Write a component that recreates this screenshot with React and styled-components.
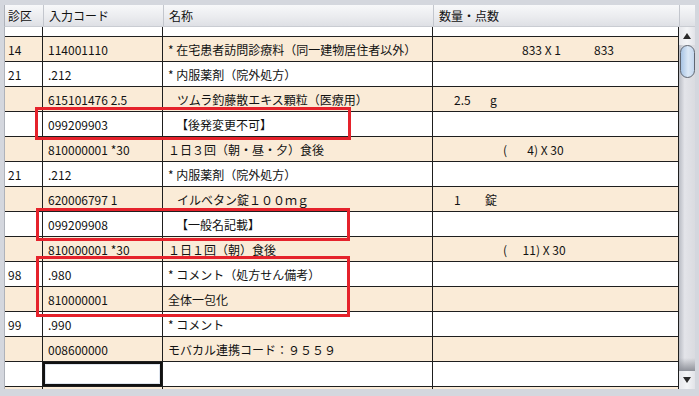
import React from "react";
import styled, { createGlobalStyle } from "styled-components";

const COLS = "38px 120px 270px 246px";

const ROWS = [
  { ku: "", code: "", name: "* 在宅時医学総合管理料（単一建物診療患者１人）", tone: "white", partial: true },
  { ku: "14", code: "114001110", name: "* 在宅患者訪問診療料（同一建物居住者以外）", tone: "tan", qty: [["", 89], ["833 X 1", 72], ["833"]] },
  { ku: "21", code: ".212", name: "* 内服薬剤（院外処方）", tone: "white" },
  { ku: "", code: "615101476 2.5", name: "ツムラ釣藤散エキス顆粒（医療用）", indent: 9, tone: "tan", qty: [["", 21], ["2.5", 36], ["g"]] },
  { ku: "", code: "099209903", name: "【後発変更不可】", indent: 8, tone: "white" },
  { ku: "", code: "810000001 *30", name: "１日３回（朝・昼・夕）食後", tone: "tan", qty: [["", 70], ["(", 10], ["4)", 25, "right"], [" X 30"]] },
  { ku: "21", code: ".212", name: "* 内服薬剤（院外処方）", tone: "white" },
  { ku: "", code: "620006797 1", name: "イルベタン錠１００ｍｇ", indent: 9, tone: "tan", qty: [["", 21], ["1", 31], ["錠"]] },
  { ku: "", code: "099209908", name: "【一般名記載】", indent: 8, tone: "white" },
  { ku: "", code: "810000001 *30", name: "１日１回（朝）食後", tone: "tan", qty: [["", 70], ["(", 10], ["11)", 27, "right"], [" X 30"]] },
  { ku: "98", code: ".980", name: "* コメント（処方せん備考）", tone: "white" },
  { ku: "", code: "810000001", name: "全体一包化", tone: "tan" },
  { ku: "99", code: ".990", name: "* コメント", tone: "white" },
  { ku: "", code: "008600000", name: "モバカル連携コード：９５５９", tone: "tan" },
  { ku: "", code: "", name: "", tone: "white", active: true },
  { ku: "", code: "", name: "", tone: "tan" },
];

const MARKS = [
  { left: 35, top: 107, width: 316, height: 33 },
  { left: 36, top: 208, width: 314, height: 33 },
  { left: 36, top: 256, width: 314, height: 61 },
];

const App = () => {
  return (
    <Frame>
      <GlobalStyle />
      <Header>
        <HeadCell>診区</HeadCell>
        <HeadCell>入力コード</HeadCell>
        <HeadCell>名称</HeadCell>
        <HeadCell>数量・点数</HeadCell>
        <HeadCell $last />
      </Header>
      <Main>
        <Body>
          {ROWS.map((r, i) => (
            <Row key={i} $tone={r.tone} $partial={r.partial}>
              <Cell $pad={3}>{r.ku}</Cell>
              <Cell $active={r.active}>{r.code}</Cell>
              <Cell $pad={5 + (r.indent || 0)}>{r.name}</Cell>
              <Cell $pad={0}>
                {(r.qty || []).map(([t, w, a], j) => (
                  <Seg key={j} $w={w} $align={a}>
                    {t}
                  </Seg>
                ))}
              </Cell>
            </Row>
          ))}
        </Body>
        <ScrollBar>
          <ScrollBtn>
            <Arrow $up />
          </ScrollBtn>
          <Track>
            <Thumb />
          </Track>
          <ScrollBtn>
            <Arrow />
          </ScrollBtn>
        </ScrollBar>
      </Main>
      {MARKS.map((m, i) => (
        <Mark key={i} style={{ left: m.left, top: m.top, width: m.width, height: m.height }} />
      ))}
    </Frame>
  );
};
export default App;

const GlobalStyle = createGlobalStyle`
  html, body {
    margin: 0;
    padding: 0;
    background: #d4d7de;
  }
  * {
    box-sizing: border-box;
  }
`;

const Frame = styled.div`
  position: relative;
  width: 699px;
  height: 396px;
  padding: 5px 4px 0 4px;
  background: #d4d7de;
  font-family: "Noto Sans CJK JP", sans-serif;
  font-size: 12px;
  color: #121212;
  overflow: hidden;
`;

const Header = styled.div`
  position: relative;
  z-index: 1;
  display: grid;
  grid-template-columns: 39px ${COLS.split(" ").slice(1).join(" ")} 16px;
  height: 22px;
  background: linear-gradient(#f7f8fa, #ebecef 55%, #dee0e5);
  border-left: 1px solid #aeb2ba;
  border-bottom: 1px solid #c9ccd2;
`;

const HeadCell = styled.div`
  display: flex;
  align-items: center;
  padding-left: ${({ $last }) => ($last ? 0 : 3)}px;
  border-right: ${({ $last }) => ($last ? "none" : "1px solid #c3c6cd")};
  white-space: nowrap;
  &:nth-child(n + 2) {
    padding-left: 5px;
  }
`;

const Main = styled.div`
  display: flex;
  height: 362px;
`;

const Body = styled.div`
  width: 675px;
  height: 100%;
  overflow: hidden;
  background: #fff;
  border-left: 1px solid #aeb2ba;
`;

const Row = styled.div`
  display: grid;
  grid-template-columns: ${COLS};
  height: 25px;
  margin-top: ${({ $partial }) => ($partial ? -15 : 0)}px;
  border-bottom: 1px solid #1e1e1e;
  background: ${({ $tone }) => ($tone === "tan" ? "#faebd7" : "#ffffff")};
  & > div {
    padding-bottom: ${({ $partial }) => ($partial ? 9 : 0)}px;
  }
`;

const Cell = styled.div`
  display: flex;
  align-items: center;
  padding-left: ${({ $pad }) => ($pad === undefined ? 5 : $pad)}px;
  border-right: 1px solid #1e1e1e;
  white-space: nowrap;
  overflow: hidden;
  background: ${({ $active }) => ($active ? "#fff" : "transparent")};
  box-shadow: ${({ $active }) =>
    $active ? "inset 0 0 0 2px #111, inset 0 0 0 3px #dfe5ee" : "none"};
`;

const Seg = styled.span`
  display: inline-block;
  flex: none;
  width: ${({ $w }) => ($w === undefined ? "auto" : `${$w}px`)};
  text-align: ${({ $align }) => $align || "left"};
  white-space: pre;
`;

const ScrollBar = styled.div`
  width: 16px;
  display: flex;
  flex-direction: column;
  background: linear-gradient(to right, #b8bbc3, #e3e4e9 35%, #dadbe0);
`;

const ScrollBtn = styled.div`
  height: 18px;
  display: flex;
  align-items: center;
  justify-content: center;
  background: linear-gradient(to right, #e6e7eb, #f4f5f7 50%, #e2e3e8);
`;

const Arrow = styled.span`
  width: 0;
  height: 0;
  border-left: 4px solid transparent;
  border-right: 4px solid transparent;
  ${({ $up }) =>
    $up ? "border-bottom: 6px solid #2a2a2a;" : "border-top: 6px solid #2a2a2a;"}
`;

const Track = styled.div`
  flex: 1;
  display: flex;
  flex-direction: column;
  background: linear-gradient(to bottom, transparent 96%, #8e9199 100%);
`;

const Thumb = styled.div`
  height: 33px;
  margin: 0 0 0 1px;
  border: 1px solid #5f6671;
  border-radius: 9px;
  background: linear-gradient(to right, #a8c4e4, #dbe8f6 55%, #c3d7ee);
`;

const Mark = styled.div`
  position: absolute;
  z-index: 2;
  border: 3px solid #e5222b;
  pointer-events: none;
`;
